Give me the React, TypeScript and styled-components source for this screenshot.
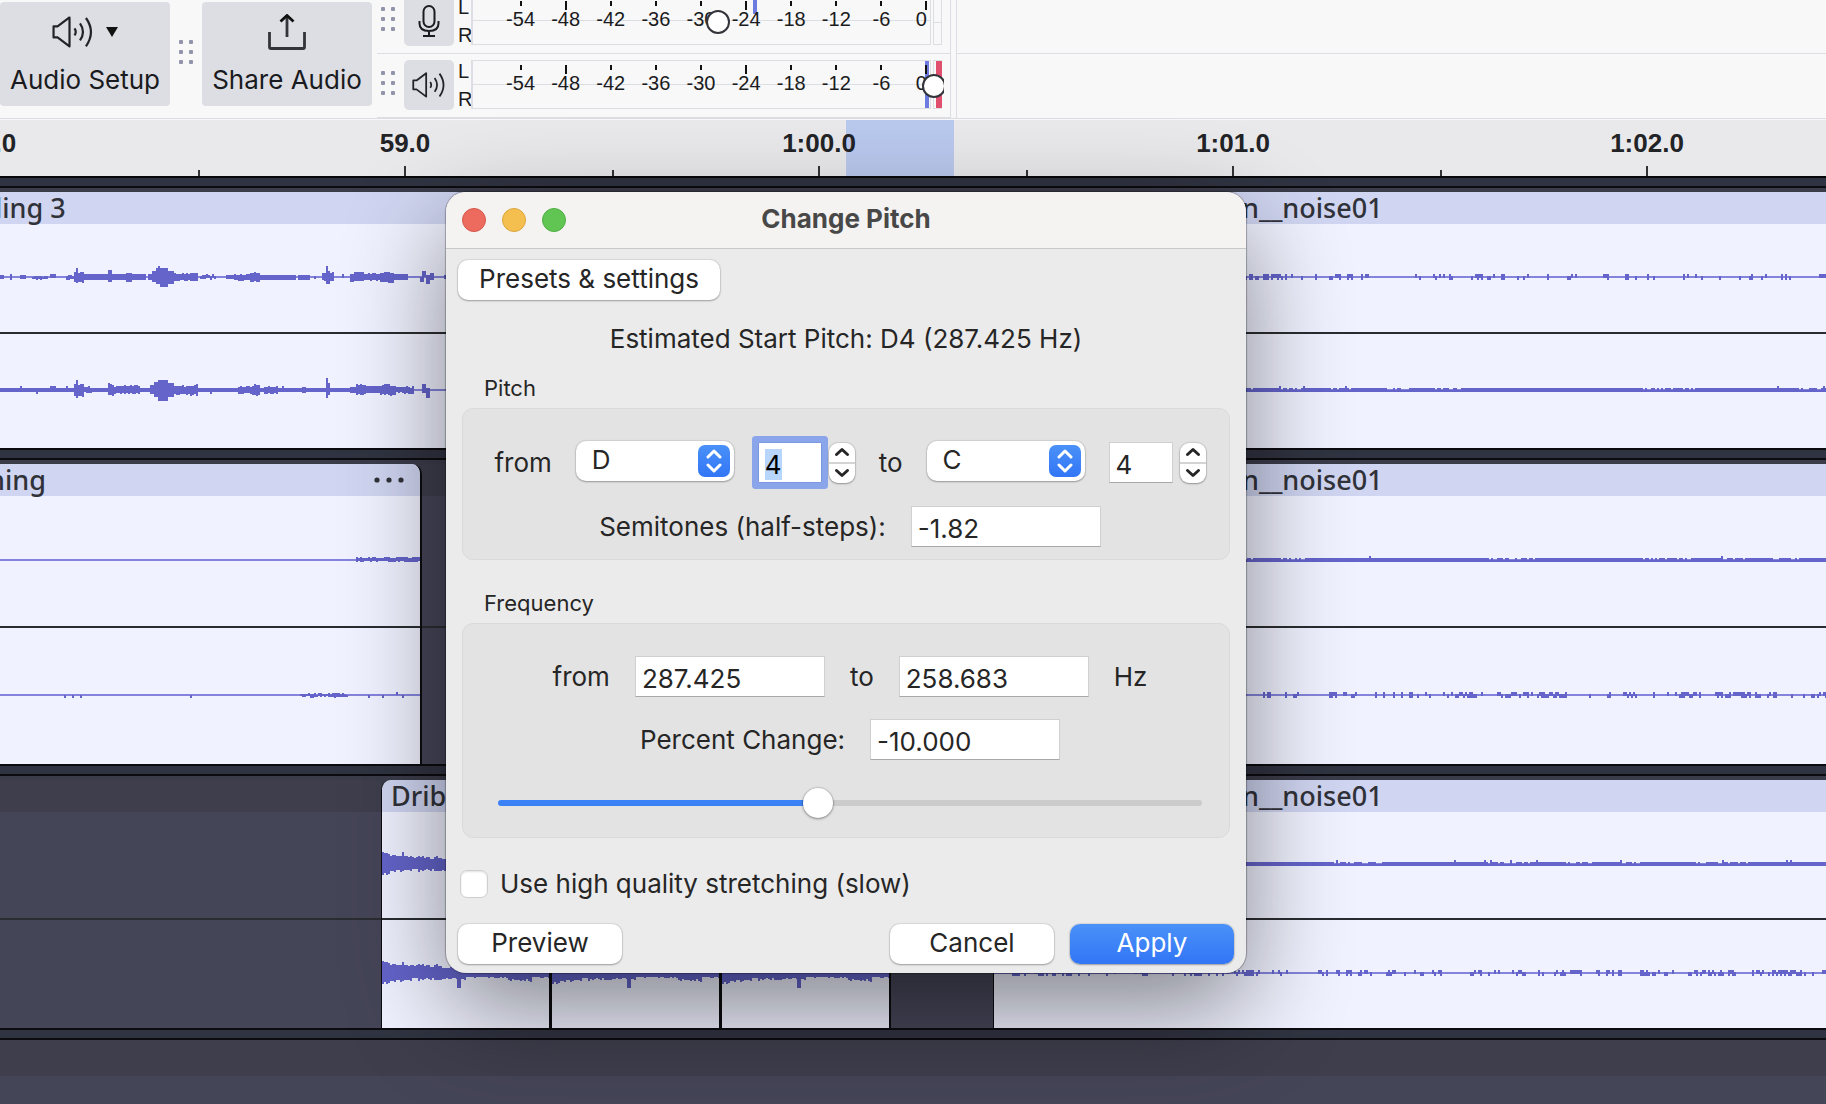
import React, { useEffect, useRef, useState } from "react";
import styled, { createGlobalStyle, css } from "styled-components";

const uiFont = `Inter, "Noto Sans", sans-serif`;
const meterFont = `"Liberation Sans", Arial, sans-serif`;

const GlobalStyle = createGlobalStyle`
  *, *::before, *::after { box-sizing: border-box; }
  body { margin: 0; background: #454558; }
  button, input, select { font: inherit; color: inherit; margin: 0; }
`;

/* ---------- window shell ---------- */

const Shell = styled.main`
  position: relative;
  display: flex;
  flex-direction: column;
  min-height: 100vh;
  overflow: hidden;
  font-family: ${uiFont};
  color: #1a1b20;
`;

/* ---------- toolbar ---------- */

const Toolbar = styled.header`
  display: flex;
  height: 119px;
  overflow: hidden;
  background: #f8f8f9;
  border-bottom: 1px solid #dddee4;
`;

const ToolGroup = styled.div`
  display: flex;
  align-items: center;
  gap: 9px;
  padding: 2px 5px 12px 0;
`;

const BigButton = styled.button`
  display: flex;
  flex-direction: column;
  align-items: center;
  gap: 14px;
  width: 170px;
  height: 104px;
  padding: 12px 0 0;
  border: 0;
  border-radius: 4px;
  background: #dddee4;
  font-size: 26px;
  line-height: 32px;
  white-space: nowrap;
`;

const IconLine = styled.span`
  display: flex;
  align-items: center;
  justify-content: center;
  gap: 12px;
  height: 36px;
`;

const GripBox = styled.span`
  display: grid;
  grid-template-columns: 4px 4px;
  grid-auto-rows: 4px;
  gap: 6px;
  margin-bottom: 4px;
`;

const GripDot = styled.i`
  border-radius: 1px;
  background: #9294ab;
`;

const MeterColumn = styled.div`
  display: flex;
  flex-direction: column;
  margin-top: -10px;
  border-right: 1px solid #dddee4;
`;

const MeterRow = styled.div`
  display: flex;
  height: 64px;
  padding: 6px 6px 8px 4px;
  border-bottom: 1px solid #dddee4;
`;

const MeterGrip = styled.div`
  display: flex;
  align-items: center;
  width: 23px;
`;

const MeterButton = styled.button`
  display: grid;
  place-items: center;
  width: 50px;
  height: 50px;
  padding: 0;
  border: 0;
  border-radius: 5px;
  background: #dddee4;
`;

const ChannelNames = styled.div`
  display: flex;
  flex-direction: column;
  justify-content: center;
  width: 17px;
  padding-left: 4px;
  overflow: hidden;
  font: 20px/28px ${meterFont};
`;

const MeterFrame = styled.div`
  position: relative;
  display: flex;
  gap: 2px;
  width: 473px;
  overflow: hidden;
`;

const MeterScale = styled.div`
  position: relative;
  display: grid;
  grid-template-columns: repeat(9, 1fr) 26px;
  width: 460px;
  padding: 4px 0 0 25px;
  border: 1px solid #dddee4;
  border-left-width: 2px;
  background: linear-gradient(#dddee4, #dddee4) 0 23px / 100% 1px no-repeat;
  font: 20px/16px ${meterFont};
`;

const ClipLight = styled.div<{ $lit?: boolean }>`
  width: 9px;
  border: solid #dddee4;
  border-width: ${(p) => (p.$lit ? "1px 0 1px 1px" : "1px")};
  background: ${(p) =>
    p.$lit
      ? "linear-gradient(90deg, #f8f8f9 2px, #e0506e 2px)"
      : "linear-gradient(#dddee4, #dddee4) 0 25px / 100% 1px no-repeat"};
`;

const MeterMark = styled.span<{ $long?: boolean; $last?: boolean }>`
  position: relative;
  display: flex;
  flex-direction: column;
  align-items: ${(p) => (p.$last ? "flex-end" : "center")};
  padding-right: ${(p) => (p.$last ? "3px" : "0")};

  &::before {
    content: "";
    width: 2px;
    height: ${(p) => (p.$long ? "9px" : "5px")};
    margin-bottom: ${(p) => (p.$long ? "1px" : "5px")};
    background: #111;
  }
`;

const PeakBar = styled.i<{ $x: number; $half?: boolean }>`
  position: absolute;
  top: 0;
  left: ${(p) => p.$x}px;
  width: 4px;
  height: ${(p) => (p.$half ? "17px" : "100%")};
  background: #6b7be0;
`;

const MeterSlider = styled.input`
  position: absolute;
  top: 14px;
  left: 0;
  width: 475px;
  height: 24px;
  appearance: none;
  background: transparent;

  &::-webkit-slider-thumb {
    appearance: none;
    width: 24px;
    height: 24px;
    border: 2px solid #33343a;
    border-radius: 50%;
    background: #fff;
  }
`;

const ToolbarRest = styled.div`
  flex: 1;
  margin-left: 5px;
  border-left: 1px solid #dddee4;
  background: linear-gradient(#dddee4, #dddee4) 0 53px / 100% 1px no-repeat;
`;

/* ---------- ruler ---------- */

const Ruler = styled.div`
  position: relative;
  display: flex;
  height: 57px;
  padding-top: 1px;
  overflow: hidden;
  background: linear-gradient(#f8f8f9 1px, #e9e9eb 1px);
`;

const RulerCells = styled.div`
  position: relative;
  display: flex;
  margin-left: -216px;
`;

const RulerCell = styled.div`
  display: flex;
  flex: none;
  flex-direction: column;
  align-items: center;
  justify-content: space-between;
  width: 414px;
  padding-top: 7px;
  background: linear-gradient(#333, #333) 0 100% / 2px 6px no-repeat;
  color: #222326;
  font: bold 26px/32px ${meterFont};

  &::after {
    content: "";
    width: 2px;
    height: 10px;
    background: #333;
  }
`;

const TimeSelection = styled.div`
  position: absolute;
  top: 1px;
  bottom: 0;
  left: 846px;
  width: 108px;
  background: #b9c8ed;
`;

/* ---------- tracks ---------- */

const TrackList = styled.div`
  display: flex;
  flex: 1;
  flex-direction: column;
  gap: 8px;
  padding-top: 8px;
  border-top: 2px solid #08080b;
  background: #303341;
`;

const Track = styled.section<{ $upper: number; $lower: number }>`
  --rows: 32px ${(p) => p.$upper}px 2px ${(p) => p.$lower}px;
  display: flex;
  padding-top: 4px;
  border: solid #0c0c10;
  border-width: 2px 0;
  background: #3b3c4a;
`;

const EmptyTrack = styled.section`
  flex: 1;
  border-top: 2px solid #0c0c10;
  background: linear-gradient(#3e3e4d 36px, #454558 36px);
`;

const TrackGap = styled.div<{ $width: number }>`
  display: grid;
  flex: none;
  grid-template-rows: var(--rows);
  width: ${(p) => p.$width}px;
  background: linear-gradient(#3e3e4d 32px, #454558 32px);
`;

const ClipBox = styled.article<{ $width?: number; $ends?: "left" | "right" | "both" }>`
  display: grid;
  flex: ${(p) => (p.$width ? "none" : "1 0 0")};
  grid-template-rows: var(--rows);
  grid-template-columns: 100%;
  min-width: 0;
  width: ${(p) => (p.$width ? `${p.$width}px` : "auto")};
  overflow: hidden;
  background: #f0f2ff;
  ${(p) =>
    (p.$ends === "left" || p.$ends === "both") &&
    css`
      border-left: 1px solid #0c0c10;
      border-top-left-radius: 10px;
    `}
  ${(p) =>
    (p.$ends === "right" || p.$ends === "both") &&
    css`
      border-right: 2px solid #0c0c10;
      border-top-right-radius: 10px;
    `}
`;

const ClipHeader = styled.div`
  display: flex;
  align-items: center;
  justify-content: space-between;
  padding-right: 16px;
  background: #d0d5f1;
  color: #303239;
  font: 500 27px/32px "Noto Sans", "Open Sans", sans-serif;
  white-space: nowrap;
`;

const ClipName = styled.span<{ $indent: number }>`
  margin-left: ${(p) => p.$indent}px;
`;

const ClipMenu = styled.button`
  display: flex;
  padding: 0;
  border: 0;
  background: none;
`;

const Lane = styled.div`
  display: flex;
  align-items: center;
  padding-bottom: 2px;
  overflow: hidden;
`;

const LaneDivider = styled.div`
  background: #2b2c31;
`;

/* ---------- wave forms ---------- */

/** [from, to, above, below, roughness] in pixels round the centre line */
type Segment = [number, number, number, number, number?];

const noise = (n: number) => {
  const v = Math.sin(n * 12.9898) * 43758.5453;
  return v - Math.floor(v);
};

const WaveSvg = styled.svg`
  flex: none;
  display: block;
`;

type WaveProps = {
  width: number;
  segments?: Segment[];
  texture?: "line" | "sparse" | "busy" | "thick";
  seed?: number;
};

function Wave({ width, segments = [], texture = "line", seed = 1 }: WaveProps) {
  const mid = 30;
  let d = "";
  for (const [from, to, up, down, rough = 0] of segments) {
    for (let x = from; x < to; x += 2) {
      const u = Math.round(up + rough * noise(x + seed));
      const b = Math.round(down + rough * noise(x * 3 + seed));
      d += `M${x} ${mid - u}h2v${u + b}h-2z`;
    }
  }
  if (texture === "sparse" || texture === "busy") {
    const limit = texture === "busy" ? 1.1 : 0.8;
    for (let x = 0; x < width; x += 2) {
      const cluster = noise(Math.floor(x / 14) + seed * 7);
      if (noise(x + seed * 3) < limit * cluster) {
        const side = noise(x * 5 + seed);
        const top = side > 0.35 ? mid - 3 : mid - 1;
        const bottom = side < 0.65 ? mid + 3 : mid + 1;
        d += `M${x} ${top}h2v${bottom - top}h-2z`;
      }
    }
  }
  if (texture === "thick") {
    for (let x = 0; x < width; x += 2) {
      const gap = noise(Math.floor(x / 26) + seed) > 0.6 && noise(x + seed) > 0.6;
      d += `M${x} ${gap ? mid : mid - 2}h2v${gap ? 2 : 4}h-2z`;
      if (noise(x * 7 + seed) > 0.98) d += `M${x} ${mid - 4}h2v6h-2z`;
    }
  }
  return (
    <WaveSvg width={width} height={60} viewBox={`0 0 ${width} 60`} shapeRendering="crispEdges" aria-hidden="true">
      <rect x="0" y={mid - 1} width={width} height="2" fill="#8484dc" />
      <path d={d} fill="#6464cb" />
    </WaveSvg>
  );
}

const speechUpper: Segment[] = [
  [0, 4, 2, 2], [10, 12, 3, 3], [20, 26, 1, 2, 2], [32, 48, 0, 2, 1], [50, 56, 3, 1], [66, 74, 1, 2, 2],
  [74, 84, 4, 4, 2], [76, 78, 9, 6], [84, 108, 3, 3], [108, 112, 7, 5], [112, 126, 3, 3], [126, 132, 4, 5],
  [132, 146, 3, 3], [148, 152, 3, 3], [152, 156, 6, 5], [156, 160, 9, 7], [158, 160, 11, 7], [160, 168, 9, 10],
  [168, 174, 6, 7], [174, 190, 3, 3, 1], [190, 198, 4, 4], [200, 216, 1, 1, 2], [226, 234, 1, 1, 2],
  [234, 250, 2, 3, 1], [250, 260, 4, 4, 1], [260, 296, 2, 3], [298, 310, 2, 3], [314, 316, 1, 2],
  [322, 334, 3, 3, 2], [326, 328, 11, 7], [328, 330, 6, 7], [342, 344, 3, 1], [350, 354, 3, 5], [354, 364, 5, 4],
  [364, 380, 3, 3, 1], [380, 394, 4, 5, 1], [394, 408, 3, 3], [420, 424, 0, 5], [422, 426, 6, 0],
  [426, 430, 2, 7], [430, 434, 4, 3], [444, 460, 2, 2],
];

const speechLower: Segment[] = [
  [0, 408, 2, 2], [20, 22, 4, 2], [36, 38, 2, 4], [50, 56, 4, 2], [66, 68, 4, 2], [74, 84, 5, 5, 2],
  [76, 78, 10, 8], [84, 92, 2, 2, 2], [108, 114, 5, 4, 2], [114, 122, 2, 2, 2], [122, 140, 4, 3, 1],
  [150, 154, 5, 4], [154, 158, 8, 7], [158, 168, 10, 11], [168, 174, 7, 7], [174, 188, 3, 3, 2],
  [188, 198, 4, 4, 2], [210, 212, 2, 4], [238, 252, 3, 3, 1], [252, 260, 4, 4, 2], [264, 278, 3, 3, 1],
  [282, 284, 4, 2], [302, 306, 3, 3], [326, 328, 12, 8], [328, 330, 7, 5], [350, 356, 3, 3],
  [356, 366, 5, 4, 1], [366, 380, 4, 3], [380, 396, 4, 4, 2], [396, 414, 2, 2, 2], [422, 426, 6, 3],
  [426, 430, 2, 8],
];

const dribbleUpper: Segment[] = [
  [0, 8, 10, 9, 2], [8, 30, 7, 6, 2], [20, 22, 12, 7], [30, 60, 5, 5, 3], [60, 90, 5, 5, 3], [90, 170, 4, 4, 2],
];

const dribbleLower: Segment[] = [
  [0, 8, 10, 9, 2], [8, 30, 7, 7, 2], [20, 22, 11, 8], [30, 60, 6, 5, 3], [60, 84, 5, 5, 2], [75, 78, 5, 15],
  [84, 126, 4, 4, 1], [126, 150, 4, 5, 4], [150, 170, 4, 3, 2],
];

/* ---------- dialog ---------- */

const DialogWindow = styled.section`
  position: absolute;
  top: 192px;
  left: 446px;
  width: 800px;
  border-radius: 20px;
  background: #ebebeb;
  color: #262626;
  font-size: 26px;
  line-height: 32px;
  overflow: clip;
  box-shadow: 0 0 1px 1px rgba(0, 0, 0, 0.28), 0 36px 100px rgba(0, 0, 0, 0.46);
`;

const TitleBar = styled.div`
  display: grid;
  grid-template-columns: 1fr auto 1fr;
  align-items: center;
  height: 57px;
  padding: 0 16px;
  border-bottom: 1px solid #c9c8c7;
  background: #f5f3f1;
`;

const TrafficLights = styled.div`
  display: flex;
  gap: 16px;
`;

const TrafficLight = styled.button<{ $color: string; $edge: string }>`
  width: 24px;
  height: 24px;
  padding: 0;
  border: 1px solid ${(p) => p.$edge};
  border-radius: 50%;
  background: ${(p) => p.$color};
`;

const Title = styled.h1`
  margin: 0;
  padding-bottom: 2px;
  color: #484848;
  font-size: 26px;
  font-weight: 700;
  line-height: 32px;
`;

const DialogBody = styled.form`
  display: flex;
  flex-direction: column;
  padding: 11px 12px 9px;
`;

const PushButton = styled.button<{ $primary?: boolean; $wide?: boolean }>`
  width: ${(p) => (p.$wide ? "262px" : "164px")};
  height: 40px;
  padding: 0 0 2px;
  border: 0;
  border-radius: 10px;
  background: ${(p) => (p.$primary ? "linear-gradient(#4a91f8, #3275f6)" : "#fff")};
  color: ${(p) => (p.$primary ? "#fff" : "#262626")};
  box-shadow: 0 0 1px 1px rgba(0, 0, 0, 0.08), 0 1px 2px rgba(0, 0, 0, 0.28);
`;

const Estimate = styled.p`
  margin: 23px 0 20px;
  text-align: center;
`;

const GroupTitle = styled.h2`
  margin: 0 0 7px;
  padding-left: 26px;
  font-size: 22px;
  font-weight: 400;
  line-height: 26px;
`;

const GroupPanel = styled.div`
  display: flex;
  flex-direction: column;
  gap: 22px;
  margin: 0 4px 30px;
  padding: 32px 27px 12px 35px;
  border: 1px solid #dadada;
  border-radius: 11px;
  background: #e3e3e3;
`;

const FieldRow = styled.div`
  display: flex;
  align-items: center;
  justify-content: center;
  gap: 25px;
  white-space: nowrap;
`;

const PitchRow = styled(FieldRow)`
  gap: 24px;
`;

const SelectBox = styled.span`
  position: relative;
  display: block;
  padding-bottom: 3px;
`;

const SelectControl = styled.select`
  display: block;
  width: 158px;
  height: 40px;
  padding: 0 40px 2px 16px;
  border: 0;
  border-radius: 10px;
  appearance: none;
  background: #fff;
  box-shadow: 0 0 1px 1px rgba(0, 0, 0, 0.08), 0 1px 2px rgba(0, 0, 0, 0.28);
`;

const SelectChip = styled.span`
  position: absolute;
  top: 4px;
  right: 4px;
  display: grid;
  place-items: center;
  width: 32px;
  height: 32px;
  border-radius: 7px;
  background: linear-gradient(#4a91f8, #3275f6);
  pointer-events: none;
`;

const TextField = styled.input<{ $short?: boolean }>`
  width: ${(p) => (p.$short ? "64px" : "190px")};
  height: 41px;
  padding: 4px 6px 0;
  border: 1px solid #d0d0d0;
  border-bottom-color: #a8a8a8;
  border-radius: 0;
  outline: 0;
  background: #fff;
  line-height: 34px;

  &:focus {
    border-color: #7b97e0;
    border-radius: 1px;
    box-shadow: 0 0 0 6px #8aa5ea;
  }

  &::selection {
    background: #b8d6fc;
    color: #000;
  }
`;

const SpinGroup = styled.span`
  display: flex;
  align-items: center;
  gap: 7px;
`;

const Stepper = styled.span`
  display: flex;
  flex-direction: column;
  width: 26px;
  height: 40px;
  border-radius: 9px;
  background: #fff;
  overflow: hidden;
  box-shadow: 0 0 1px 1px rgba(0, 0, 0, 0.1), 0 1px 2px rgba(0, 0, 0, 0.28);
`;

const StepButton = styled.button`
  display: grid;
  flex: 1;
  place-items: center;
  padding: 0;
  border: 0;
  background: none;

  & + & {
    border-top: 2px solid #d4d4d4;
  }
`;

const PercentSlider = styled.input`
  width: 100%;
  height: 30px;
  margin: 6px 0 7px;
  appearance: none;
  background: transparent;

  &::-webkit-slider-runnable-track {
    height: 6px;
    border-radius: 3px;
    background: linear-gradient(90deg, #3b82f7 45%, #cbcbcb 45%);
  }

  &::-webkit-slider-thumb {
    appearance: none;
    width: 30px;
    height: 30px;
    margin-top: -12px;
    border-radius: 50%;
    background: #fff;
    box-shadow: 0 0 1px 1px rgba(0, 0, 0, 0.1), 0 1px 3px rgba(0, 0, 0, 0.35);
  }
`;

const CheckRow = styled.label`
  display: flex;
  align-items: center;
  gap: 12px;
  padding-left: 2px;
  margin-bottom: 24px;
`;

const CheckBox = styled.input`
  width: 28px;
  height: 28px;
  border: 1px solid #cfcfcf;
  border-radius: 7px;
  appearance: none;
  background: #fff;
  box-shadow: inset 0 1px 2px rgba(0, 0, 0, 0.12);
`;

const Actions = styled.div`
  display: flex;
  gap: 16px;
`;

const Spacer = styled.span`
  flex: 1;
`;

/* ---------- icons ---------- */

function SpeakerIcon({ size }: { size: number }) {
  return (
    <svg width={size} height={size * 0.76} viewBox="0 0 42 32" fill="none" stroke="#222328" strokeWidth="2.2" aria-hidden="true">
      <path d="M1.5 10.500v11h4L17.500 30.500V1.500L5.500 10.500z" strokeLinejoin="round" />
      <path d="M22.500 12.500q2.500 3.500 0 7M28 7.500q6 8.500 0 17M34 2q10 14 0 28.500" />
    </svg>
  );
}

function ShareIcon() {
  return (
    <svg width="38" height="36" viewBox="0 0 38 36" fill="none" stroke="#33343a" strokeWidth="2.800" aria-hidden="true">
      <path d="M1.500 18v15q0 1.500 1.500 1.500h32q1.500 0 1.500-1.500V18" />
      <path d="M19 23V2" />
      <path d="M12.500 7.500L19 1.500l6.500 6" stroke="#111" />
    </svg>
  );
}

function MicIcon() {
  return (
    <svg width="22" height="34" viewBox="0 0 22 34" fill="none" stroke="#1b1c20" strokeWidth="2" aria-hidden="true">
      <rect x="5.500" y="2" width="11" height="21" rx="5.500" />
      <path d="M1.500 17v2.500q0 7.500 9.500 7.500t9.500-7.500V17M11 27v5M5 32h12" />
    </svg>
  );
}

function Chevron({ up }: { up?: boolean }) {
  return (
    <svg width="16" height="10" viewBox="0 0 16 10" fill="none" stroke="#262626" strokeWidth="3" strokeLinecap="round" strokeLinejoin="round" aria-hidden="true">
      <path d={up ? "M2.500 7.500L8 2.500l5.500 5" : "M2.500 2.500L8 7.500l5.500-5"} />
    </svg>
  );
}

function Grip() {
  return (
    <GripBox aria-hidden="true">
      {[0, 1, 2, 3, 4, 5].map((n) => (
        <GripDot key={n} />
      ))}
    </GripBox>
  );
}

/* ---------- composed parts ---------- */

const levels = ["-54", "-48", "-42", "-36", "-30", "-24", "-18", "-12", "-6", "0"];

type MeterProps = {
  label: string;
  icon: React.ReactNode;
  peak: number;
  half?: boolean;
  lit?: boolean;
  level: number;
};

function Meter({ label, icon, peak, half, lit, level }: MeterProps) {
  return (
    <MeterRow>
      <MeterGrip>
        <Grip />
      </MeterGrip>
      <MeterButton type="button" aria-label={label}>
        {icon}
      </MeterButton>
      <ChannelNames>
        <span>L</span>
        <span>R</span>
      </ChannelNames>
      <MeterFrame>
        <MeterScale>
          <PeakBar $x={peak} $half={half} />
          {levels.map((text, i) => (
            <MeterMark key={text} $long={i === 1 || i === 5 || i === 9} $last={i === 9}>
              {text}
            </MeterMark>
          ))}
        </MeterScale>
        <ClipLight $lit={lit} />
        <MeterSlider type="range" min="0" max="1" step="0.001" defaultValue={level} aria-label={`${label} level`} />
      </MeterFrame>
    </MeterRow>
  );
}

type ClipProps = {
  name?: string;
  indent?: number;
  width?: number;
  ends?: "left" | "right" | "both";
  menu?: boolean;
  upper: WaveProps;
  lower: WaveProps;
};

function Clip({ name, indent = 0, width, ends, menu, upper, lower }: ClipProps) {
  return (
    <ClipBox $width={width} $ends={ends}>
      <ClipHeader>
        <ClipName $indent={indent}>{name}</ClipName>
        {menu && (
          <ClipMenu type="button" aria-label="Clip menu">
            <svg width="30" height="8" viewBox="0 0 30 8" fill="#303239" aria-hidden="true">
              <circle cx="3" cy="4" r="2.600" />
              <circle cx="15" cy="4" r="2.600" />
              <circle cx="27" cy="4" r="2.600" />
            </svg>
          </ClipMenu>
        )}
      </ClipHeader>
      <Lane>
        <Wave {...upper} />
      </Lane>
      <LaneDivider />
      <Lane>
        <Wave {...lower} />
      </Lane>
    </ClipBox>
  );
}

function Gap({ width }: { width: number }) {
  return (
    <TrackGap $width={width}>
      <span />
      <span />
      <LaneDivider />
    </TrackGap>
  );
}

function NoteSelect({ label, value }: { label: string; value: string }) {
  return (
    <SelectBox>
      <SelectControl aria-label={label} defaultValue={value}>
        {["C", "D", "E", "F", "G", "A", "B"].map((n) => (
          <option key={n}>{n}</option>
        ))}
      </SelectControl>
      <SelectChip>
        <svg width="16" height="24" viewBox="0 0 16 24" fill="none" stroke="#fff" strokeWidth="3" strokeLinecap="round" strokeLinejoin="round" aria-hidden="true">
          <path d="M2 8l6-6 6 6M2 16l6 6 6-6" />
        </svg>
      </SelectChip>
    </SelectBox>
  );
}

function OctaveField({ label, focused }: { label: string; focused?: boolean }) {
  const [value, setValue] = useState(4);
  const ref = useRef<HTMLInputElement>(null);
  useEffect(() => {
    if (focused) {
      ref.current?.focus();
      ref.current?.select();
    }
  }, [focused]);
  return (
    <SpinGroup>
      <TextField $short ref={ref} aria-label={label} value={value} onChange={(e) => setValue(Number(e.target.value) || 0)} />
      <Stepper>
        <StepButton type="button" aria-label={`${label} up`} onClick={() => setValue(value + 1)}>
          <Chevron up />
        </StepButton>
        <StepButton type="button" aria-label={`${label} down`} onClick={() => setValue(value - 1)}>
          <Chevron />
        </StepButton>
      </Stepper>
    </SpinGroup>
  );
}

function ChangePitchDialog() {
  return (
    <DialogWindow role="dialog" aria-labelledby="dialog-title">
      <TitleBar>
        <TrafficLights>
          <TrafficLight type="button" aria-label="Close" $color="#ed6a5e" $edge="#d5574b" />
          <TrafficLight type="button" aria-label="Minimize" $color="#f5bf4f" $edge="#dba43b" />
          <TrafficLight type="button" aria-label="Zoom" $color="#61c554" $edge="#4fae43" />
        </TrafficLights>
        <Title id="dialog-title">Change Pitch</Title>
      </TitleBar>
      <DialogBody onSubmit={(e) => e.preventDefault()}>
        <PushButton type="button" $wide>
          Presets &amp; settings
        </PushButton>
        <Estimate>Estimated Start Pitch: D4 (287.425 Hz)</Estimate>

        <GroupTitle id="pitch-title">Pitch</GroupTitle>
        <GroupPanel role="group" aria-labelledby="pitch-title">
          <PitchRow>
            <span>from</span>
            <NoteSelect label="from pitch" value="D" />
            <OctaveField label="from octave" focused />
            <span>to</span>
            <NoteSelect label="to pitch" value="C" />
            <OctaveField label="to octave" />
          </PitchRow>
          <FieldRow>
            <label htmlFor="semitones">Semitones (half-steps):</label>
            <TextField id="semitones" defaultValue="-1.82" />
          </FieldRow>
        </GroupPanel>

        <GroupTitle id="frequency-title">Frequency</GroupTitle>
        <GroupPanel role="group" aria-labelledby="frequency-title">
          <FieldRow>
            <label htmlFor="freq-from">from</label>
            <TextField id="freq-from" defaultValue="287.425" />
            <label htmlFor="freq-to">to</label>
            <TextField id="freq-to" defaultValue="258.683" />
            <span>Hz</span>
          </FieldRow>
          <FieldRow>
            <label htmlFor="percent">Percent Change:</label>
            <TextField id="percent" defaultValue="-10.000" />
          </FieldRow>
          <PercentSlider type="range" min="0" max="1000" defaultValue="453" aria-label="Percent change" />
        </GroupPanel>

        <CheckRow>
          <CheckBox type="checkbox" />
          Use high quality stretching (slow)
        </CheckRow>
        <Actions>
          <PushButton type="button">Preview</PushButton>
          <Spacer />
          <PushButton type="button">Cancel</PushButton>
          <PushButton type="submit" $primary>
            Apply
          </PushButton>
        </Actions>
      </DialogBody>
    </DialogWindow>
  );
}

export default function App() {
  return (
    <>
      <GlobalStyle />
      <Shell>
        <Toolbar>
          <ToolGroup>
            <BigButton type="button">
              <IconLine>
                <SpeakerIcon size={42} />
                <svg width="12" height="10" viewBox="0 0 12 10" aria-hidden="true">
                  <path d="M0 0h12L6 10z" fill="#111" />
                </svg>
              </IconLine>
              Audio Setup
            </BigButton>
            <Grip />
            <BigButton type="button">
              <IconLine>
                <ShareIcon />
              </IconLine>
              Share Audio
            </BigButton>
          </ToolGroup>
          <MeterColumn>
            <Meter label="Record meter" icon={<MicIcon />} peak={280} half level={0.521} />
            <Meter label="Playback meter" icon={<SpeakerIcon size={34} />} peak={452} lit level={1} />
          </MeterColumn>
          <ToolbarRest />
        </Toolbar>

        <Ruler>
          <TimeSelection />
          <RulerCells>
            {["58.0", "59.0", "1:00.0", "1:01.0", "1:02.0"].map((t) => (
              <RulerCell key={t}>{t}</RulerCell>
            ))}
          </RulerCells>
        </Ruler>

        <TrackList>
          <Track $upper={108} $lower={114}>
            <Clip
              name="ling 3"
              indent={-5}
              width={993}
              upper={{ width: 993, segments: speechUpper }}
              lower={{ width: 993, segments: speechLower }}
            />
            <Clip
              name="n__noise01"
              indent={249}
              upper={{ width: 2000, texture: "sparse", seed: 3 }}
              lower={{ width: 2000, texture: "thick", seed: 5 }}
            />
          </Track>

          <Track $upper={130} $lower={136}>
            <Clip
              name="ning"
              indent={-12}
              width={422}
              ends="right"
              menu
              upper={{ width: 422, segments: [[356, 422, 2, 1, 1]] }}
              lower={{ width: 422, segments: [[64, 66, 0, 3], [72, 74, 0, 3], [80, 82, 0, 3], [190, 192, 0, 3], [300, 348, 0, 1, 2], [368, 370, 0, 3], [382, 384, 0, 3], [396, 398, 3, 0], [402, 404, 0, 3]] }}
            />
            <Gap width={571} />
            <Clip
              name="n__noise01"
              indent={249}
              upper={{ width: 2000, texture: "thick", seed: 11 }}
              lower={{ width: 2000, texture: "busy", seed: 8 }}
            />
          </Track>

          <Track $upper={106} $lower={108}>
            <Gap width={381} />
            {["Dribble", "", ""].map((name, i) => (
              <Clip
                key={i}
                name={name}
                indent={9}
                width={170}
                ends="both"
                upper={{ width: 170, segments: dribbleUpper }}
                lower={{ width: 170, segments: dribbleLower }}
              />
            ))}
            <Gap width={102} />
            <Clip
              name="n__noise01"
              indent={248}
              ends="left"
              upper={{ width: 2000, texture: "thick", seed: 17 }}
              lower={{ width: 2000, texture: "sparse", seed: 13 }}
            />
          </Track>

          <EmptyTrack />
        </TrackList>

        <ChangePitchDialog />
      </Shell>
    </>
  );
}
